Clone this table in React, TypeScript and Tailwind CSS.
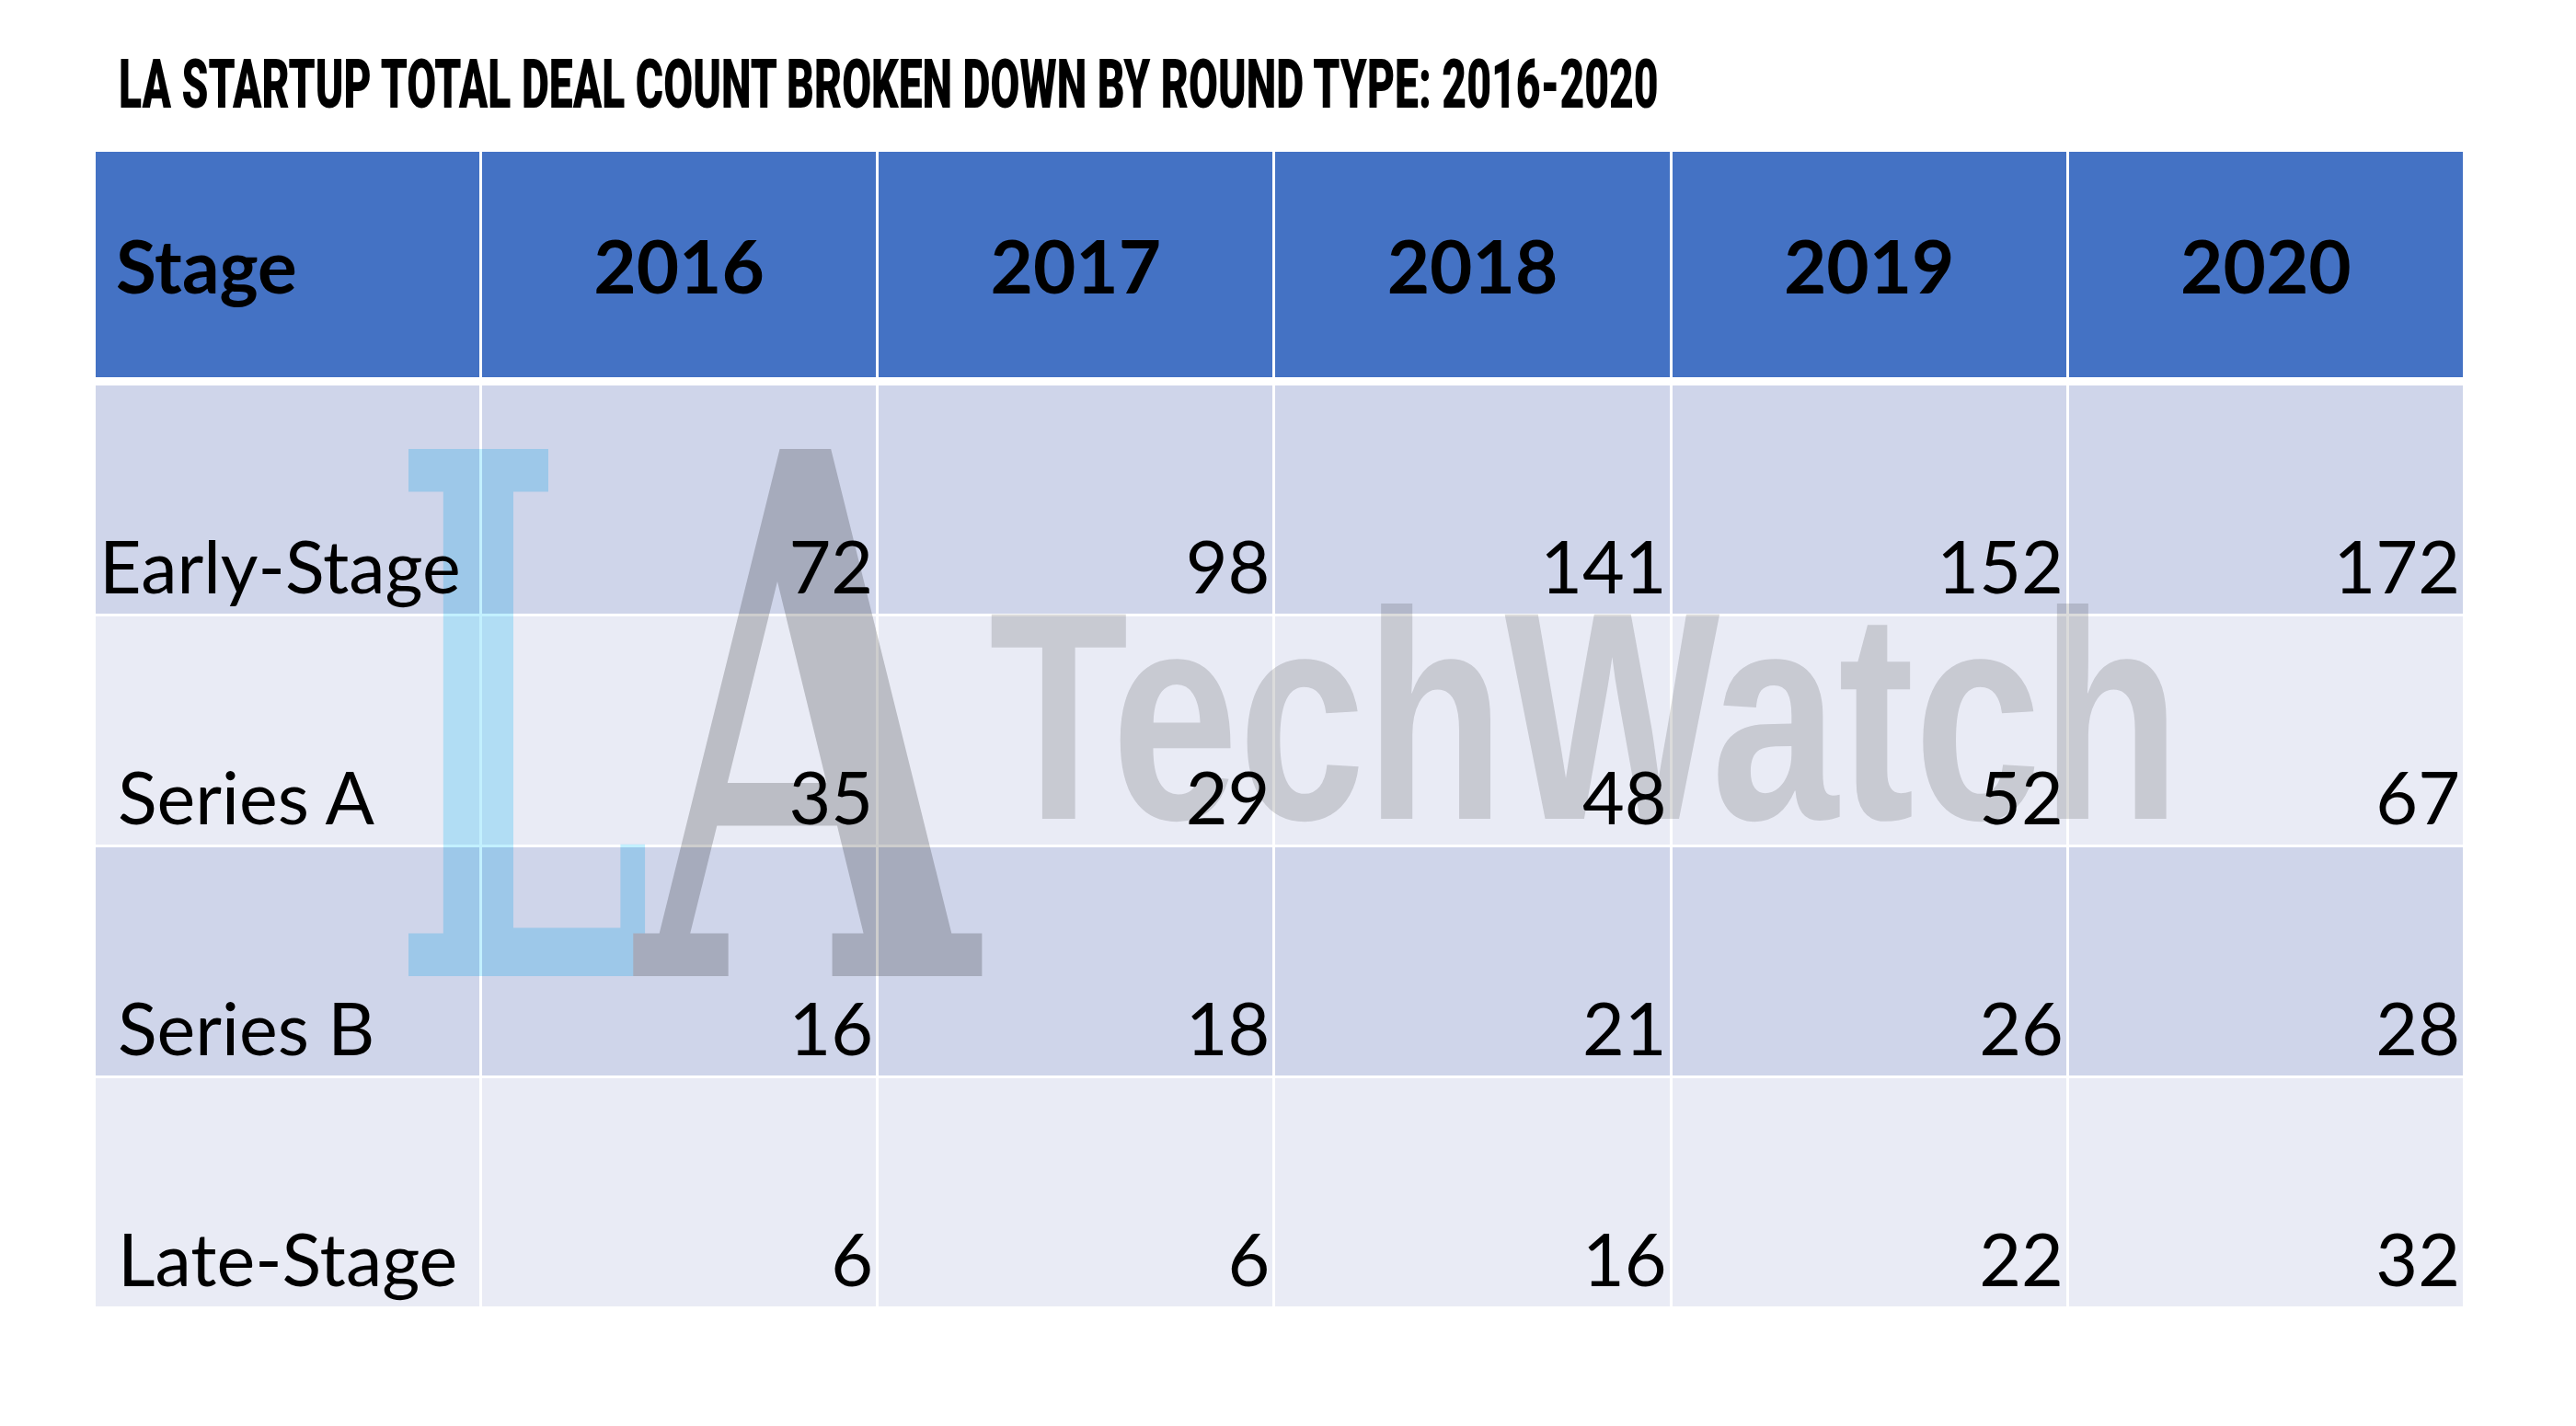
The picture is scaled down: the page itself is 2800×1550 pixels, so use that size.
import React from "react"

const years = ["2016", "2017", "2018", "2019", "2020"]

const rows = [
  { stage: "Early-Stage", indent: "pl-[4px]", values: [72, 98, 141, 152, 172] },
  { stage: "Series A", indent: "pl-[24px]", values: [35, 29, 48, 52, 67] },
  { stage: "Series B", indent: "pl-[24px]", values: [16, 18, 21, 26, 28] },
  { stage: "Late-Stage", indent: "pl-[24px]", values: [6, 6, 16, 22, 32] },
]

function Watermark() {
  return (
    <svg
      className="absolute inset-0 pointer-events-none mix-blend-multiply"
      width="2800"
      height="1550"
      viewBox="0 0 2800 1550"
    >
      <text
        x="1075"
        y="890"
        fontFamily="'Liberation Sans', Arial, sans-serif"
        fontWeight="bold"
        fontSize="323"
        textLength="1295"
        lengthAdjust="spacingAndGlyphs"
        fill="#DBDBDB"
      >
        TechWatch
      </text>
      <text
        x="425"
        y="1061"
        fontFamily="'DejaVu Serif', serif"
        fontWeight="bold"
        fontSize="786"
        textLength="285"
        lengthAdjust="spacingAndGlyphs"
        fill="#C2F0FE"
      >
        L
      </text>
      <text
        x="692"
        y="1061"
        fontFamily="'DejaVu Serif', serif"
        fontWeight="bold"
        fontSize="786"
        textLength="370"
        lengthAdjust="spacingAndGlyphs"
        fill="#CDCDCD"
      >
        A
      </text>
    </svg>
  )
}

export default function App() {
  return (
    <div className="relative w-[2800px] h-[1550px] bg-white overflow-hidden">
      <div className="flex flex-col pt-[55px]">
        {/* Title */}
        <div className="h-[110px] pl-[129px]">
          <div className="origin-left scale-x-[0.621] whitespace-nowrap font-[Roboto,sans-serif] font-black text-[74.5px] leading-none text-black uppercase">
            LA Startup Total Deal Count Broken Down By Round Type: 2016-2020
          </div>
        </div>

        {/* Table */}
        <div className="ml-[104px] w-[2573px] flex flex-col gap-[3px] font-[Lato,sans-serif] text-black">
          <div className="grid grid-cols-[417px_repeat(5,minmax(0,1fr))] gap-x-[3px] h-[245px] mb-[6px]">
            <div className="bg-[#4472C4] flex items-center pl-[22px] text-[80px] font-bold leading-none">Stage</div>
            {years.map((y) => (
              <div key={y} className="bg-[#4472C4] flex items-center justify-center text-[80px] font-bold leading-none">
                {y}
              </div>
            ))}
          </div>

          {rows.map((row, i) => {
            const bg = i % 2 === 0 ? "bg-[#CFD5EA]" : "bg-[#E9EBF5]"
            return (
              <div key={row.stage} className="grid grid-cols-[417px_repeat(5,minmax(0,1fr))] gap-x-[3px] h-[248px]">
                <div className={`${bg} ${row.indent} flex items-end pb-[13px] text-[79px] leading-none whitespace-nowrap`}>
                  {row.stage}
                </div>
                {row.values.map((v, j) => (
                  <div key={j} className={`${bg} flex items-end justify-end pr-[3px] pb-[13px] text-[79px] leading-none`}>
                    {v}
                  </div>
                ))}
              </div>
            )
          })}
        </div>
      </div>

      <Watermark />
    </div>
  )
}
